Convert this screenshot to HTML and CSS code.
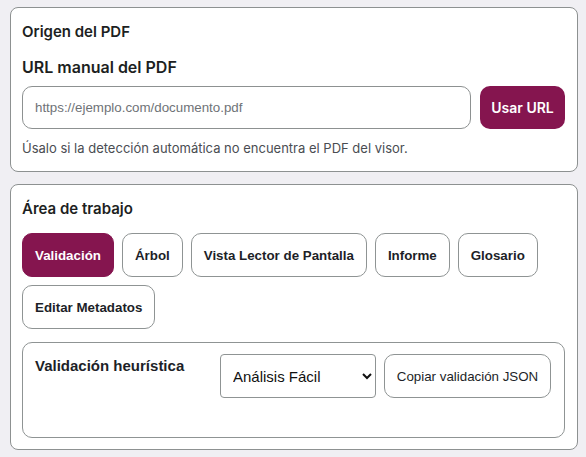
FILE: index.html
```html
<!DOCTYPE html>
<html lang="es">
<head>
<meta charset="utf-8">
<link rel="stylesheet" href="styles.css">
</head>
<body>
<main class="page">
  <section class="card card-source">
    <h2 class="card-title">Origen del PDF</h2>
    <h3 class="sub-title">URL manual del PDF</h3>
    <div class="url-row">
      <input class="url-input" type="text" placeholder="https://ejemplo.com/documento.pdf">
      <button class="btn-primary">Usar URL</button>
    </div>
    <p class="help">Úsalo si la detección automática no encuentra el PDF del visor.</p>
  </section>
  <section class="card card-work">
    <h2 class="card-title">Área de trabajo</h2>
    <div class="tabs">
      <button class="tab tab-active">Validación</button>
      <button class="tab">Árbol</button>
      <button class="tab">Vista Lector de Pantalla</button>
      <button class="tab">Informe</button>
      <button class="tab">Glosario</button>
      <button class="tab">Editar Metadatos</button>
    </div>
    <div class="panel">
      <h3 class="panel-title">Validación heurística</h3>
      <div class="panel-controls">
        <select class="mode-select">
          <option>Análisis Fácil</option>
        </select>
        <button class="btn-secondary">Copiar validación JSON</button>
      </div>
    </div>
  </section>
</main>
</body>
</html>
```
FILE: styles.css
```css
html, body {
  margin: 0;
  padding: 0;
  background: #f0eff3;
}
body {
  font-family: Inter, "Liberation Sans", sans-serif;
  color: #1f2328;
}
.page {
  padding: 7px 8px 0 10px;
  display: flex;
  flex-direction: column;
  gap: 12px;
}
.card {
  background: #fff;
  border: 1px solid #8d9191;
  border-radius: 8px;
  padding: 12px 12px 14px 11px;
}
.card-title {
  margin: 0;
  font-size: 15px;
  line-height: 24px;
  font-weight: 600;
  color: #1d1f22;
}
.sub-title {
  margin: 12px 0 8px;
  font-size: 16px;
  line-height: 22px;
  font-weight: 600;
  color: #1d1f22;
}
.url-row {
  display: flex;
  gap: 9px;
}
.url-input {
  flex: 1;
  height: 43px;
  box-sizing: border-box;
  border: 1px solid #8d9191;
  border-radius: 10px;
  padding: 0 12px;
  font-family: "Liberation Sans", Arial, sans-serif;
  font-size: 13.333px;
  color: #333;
  outline: none;
}
.url-input::placeholder {
  color: #6f7377;
}
.btn-primary {
  width: 85px;
  height: 43px;
  border: none;
  border-radius: 10px;
  background: #85154f;
  color: #fff;
  font-family: Inter, "Liberation Sans", sans-serif;
  font-size: 14px;
  font-weight: 600;
  padding: 0;
}
.help {
  margin: 10px 0 0;
  font-size: 13px;
  line-height: 18px;
  color: #4a4d52;
}
.card-work {
  padding-bottom: 11px;
}
.tabs {
  margin-top: 12px;
  display: flex;
  flex-wrap: wrap;
  gap: 8px;
}
.tab {
  height: 44px;
  padding: 0 12px;
  background: #fff;
  border: 1px solid #8f9494;
  border-radius: 10px;
  font-family: "Liberation Sans", Arial, sans-serif;
  font-size: 13.333px;
  font-weight: 700;
  color: #1d1f28;
}
.tab-active {
  background: #85154f;
  border-color: #85154f;
  color: #fff;
}
.panel {
  margin-top: 13px;
  border: 1px solid #8f9494;
  border-radius: 10px;
  padding: 11px 13px 11px 12px;
  min-height: 72px;
  display: flex;
  justify-content: space-between;
  align-items: flex-start;
}
.panel-title {
  margin: 0;
  font-family: "Liberation Sans", Arial, sans-serif;
  font-size: 15px;
  line-height: 24px;
  font-weight: 700;
  color: #1d1f28;
}
.panel-controls {
  display: flex;
  gap: 8px;
}
.mode-select {
  width: 156px;
  height: 44px;
  box-sizing: border-box;
  border: 1px solid #8f9494;
  border-radius: 4px;
  background: #fff;
  padding: 0 8px;
  font-family: "Liberation Sans", Arial, sans-serif;
  font-size: 15px;
  color: #111;
}
.btn-secondary {
  width: 167px;
  height: 44px;
  background: #fff;
  border: 1px solid #8f9494;
  border-radius: 10px;
  font-family: "Liberation Sans", Arial, sans-serif;
  font-size: 13.333px;
  color: #1d1f28;
  padding: 0;
}
```
